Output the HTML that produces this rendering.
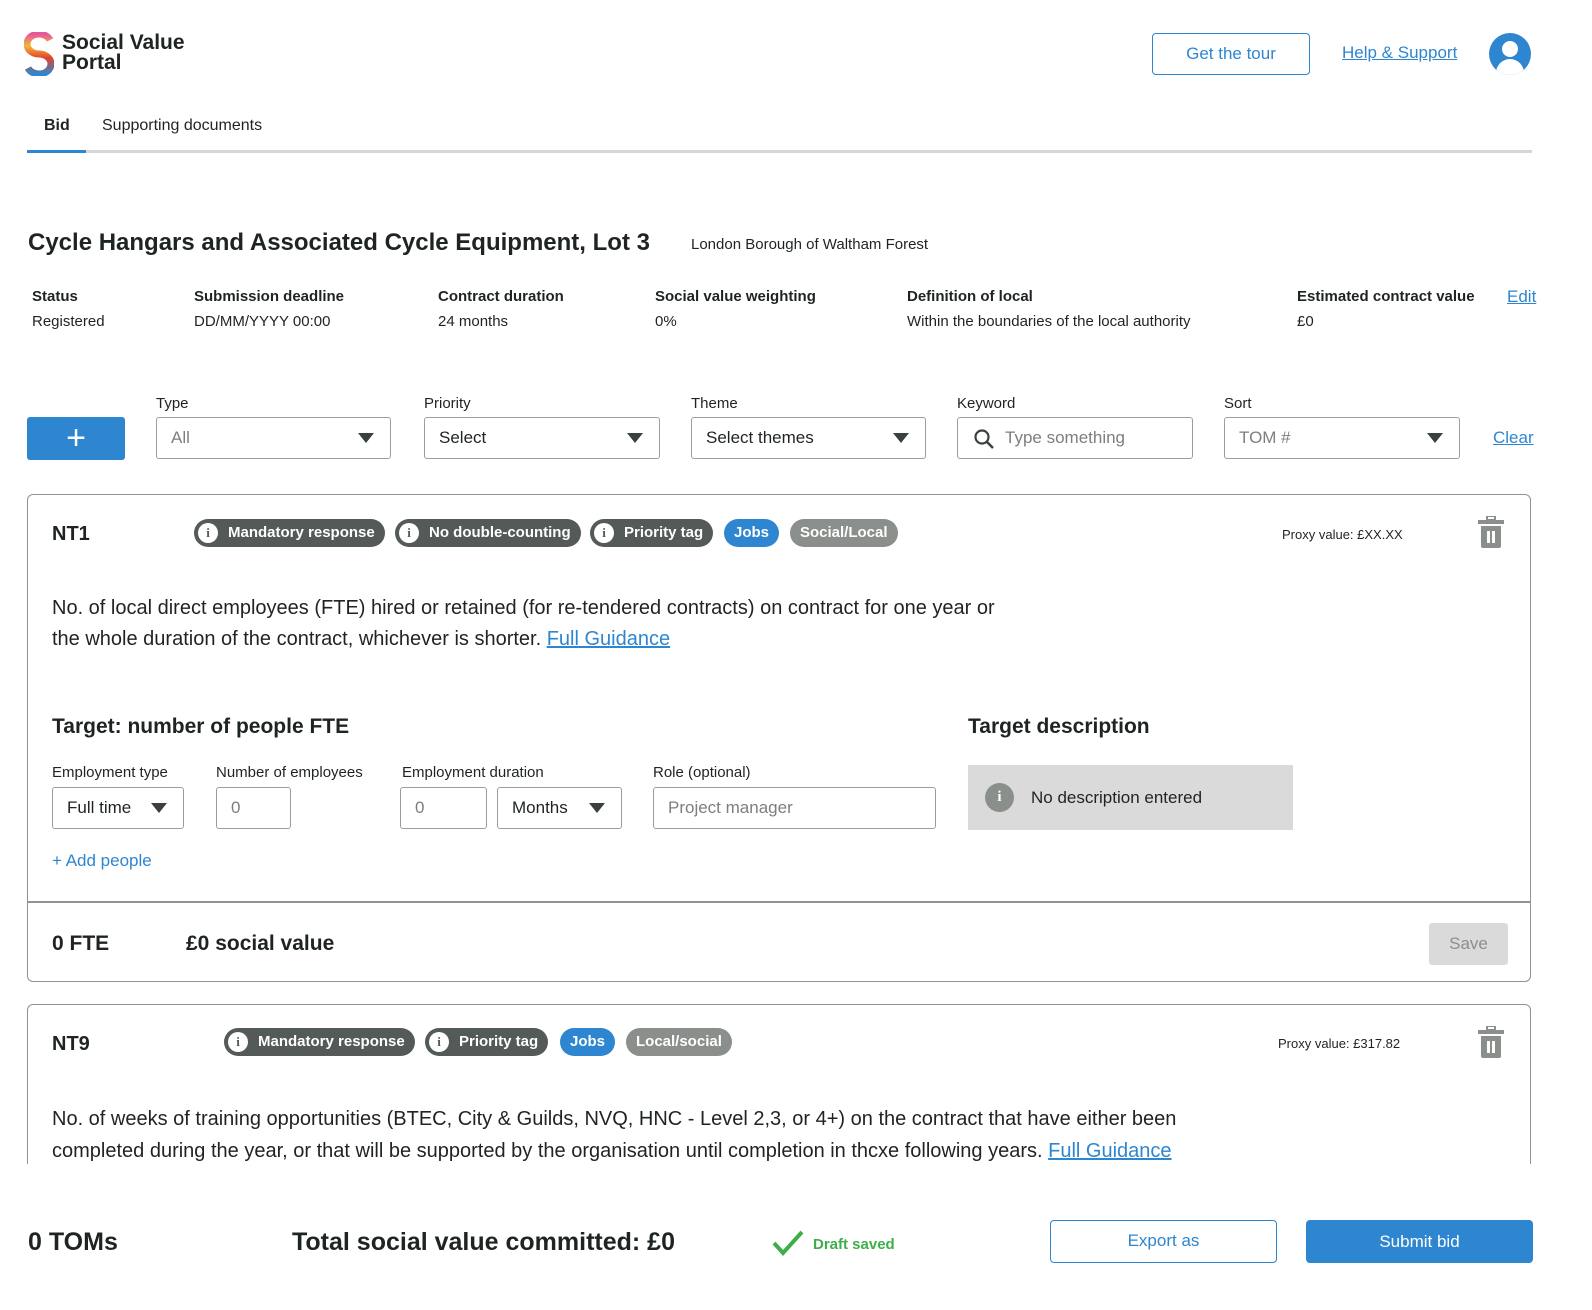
<!DOCTYPE html>
<html><head><meta charset="utf-8"><style>
*{box-sizing:border-box;margin:0;padding:0}
body{width:1592px;height:1310px;background:#fff;font-family:"Liberation Sans",sans-serif;color:#1e2422;position:relative;overflow:hidden}
.a{position:absolute}
.lbl{font-size:15px;color:#1e2422}
.mh{font-size:15px;font-weight:bold}
.mv{font-size:15px;margin-top:8px}
.inp{position:absolute;height:42px;border:1.5px solid #9a9f9d;border-radius:3px;font-size:17px;color:#7b7f7d;padding:0 14px;line-height:39px;background:#fff}
.dd:after{content:"";position:absolute;right:16px;top:15px;border-left:8px solid transparent;border-right:8px solid transparent;border-top:10px solid #3a403e}
.link{color:#2e86d0;text-decoration:underline}
.card{position:absolute;left:27px;width:1504px;border:1.5px solid #8f9492;border-radius:6px;background:#fff}
.pill{position:absolute;height:28px;border-radius:14px;color:#fff;font-weight:bold;font-size:15px;line-height:28px;padding:0 10px 0 34px;background:#535a57}
.pill i{position:absolute;left:4px;top:4px;width:20px;height:20px;border-radius:50%;background:#fff;color:#535a57;font-style:normal;font-family:"Liberation Serif",serif;font-size:13px;text-align:center;line-height:20px}
.pb{background:#2e86d0;padding:0 10px}
.pg{background:#8a8f8c;padding:0 10px}
.trash{position:absolute;width:26px;height:32px}
</style></head><body>
<svg class="a" style="left:24px;top:32px" width="30" height="44" viewBox="0 0 30 44">
<path d="M26 8 A12 10 0 1 0 15 22 A12 10 0 1 1 4 36" fill="none" stroke="url(#g)" stroke-width="7"/>
<defs><linearGradient id="g" x1="0" y1="0" x2="0" y2="1"><stop offset="0" stop-color="#e5569b"/><stop offset=".3" stop-color="#f4b63b"/><stop offset=".6" stop-color="#e0432f"/><stop offset="1" stop-color="#2e86d0"/></linearGradient></defs></svg>
<div class="a" style="left:62px;top:33px;font-size:21px;font-weight:bold;line-height:20px;color:#1e2422">Social Value<br>Portal</div>
<div class="a" style="left:1152px;top:33px;width:158px;height:42px;border:1.5px solid #2e86d0;border-radius:4px;color:#2e86d0;font-size:17px;text-align:center;line-height:39px">Get the tour</div>
<div class="a link" style="left:1342px;top:43px;font-size:17px">Help &amp; Support</div>
<div class="a" style="left:1489px;top:33px;width:42px;height:42px;border-radius:50%;background:#2e86d0;overflow:hidden">
<div class="a" style="left:13px;top:8px;width:16px;height:16px;border-radius:50%;background:#fff"></div>
<div class="a" style="left:7px;top:26px;width:28px;height:20px;border-radius:14px 14px 0 0;background:#fff"></div></div>
<div class="a" style="left:44px;top:117px;font-size:16px;font-weight:bold">Bid</div>
<div class="a" style="left:102px;top:117px;font-size:16px">Supporting documents</div>
<div class="a" style="left:27px;top:150px;width:1505px;height:3px;background:#d5d7d6"></div>
<div class="a" style="left:27px;top:150px;width:59px;height:3px;background:#2e86d0"></div>
<div class="a" style="left:28px;top:229px;font-size:24px;font-weight:bold">Cycle Hangars and Associated Cycle Equipment, Lot 3</div>
<div class="a" style="left:691px;top:236px;font-size:15px">London Borough of Waltham Forest</div>
<div class="a" style="left:32px;top:288px"><div class="mh">Status</div><div class="mv">Registered</div></div>
<div class="a" style="left:194px;top:288px"><div class="mh">Submission deadline</div><div class="mv">DD/MM/YYYY 00:00</div></div>
<div class="a" style="left:438px;top:288px"><div class="mh">Contract duration</div><div class="mv">24 months</div></div>
<div class="a" style="left:655px;top:288px"><div class="mh">Social value weighting</div><div class="mv">0%</div></div>
<div class="a" style="left:907px;top:288px"><div class="mh">Definition of local</div><div class="mv">Within the boundaries of the local authority</div></div>
<div class="a" style="left:1297px;top:288px"><div class="mh">Estimated contract value</div><div class="mv">£0</div></div>
<div class="a link" style="left:1507px;top:287px;font-size:17px">Edit</div>
<div class="a" style="left:27px;top:417px;width:98px;height:43px;background:#2e86d0;border-radius:3px;color:#fff;font-size:34px;text-align:center;line-height:42px">+</div>
<div class="a lbl" style="left:156px;top:395px">Type</div>
<div class="inp dd" style="left:156px;top:417px;width:235px">All</div>
<div class="a lbl" style="left:424px;top:395px">Priority</div>
<div class="inp dd" style="left:424px;top:417px;width:236px;color:#1e2422">Select</div>
<div class="a lbl" style="left:691px;top:395px">Theme</div>
<div class="inp dd" style="left:691px;top:417px;width:235px;color:#1e2422">Select themes</div>
<div class="a lbl" style="left:957px;top:395px">Keyword</div>
<div class="inp" style="left:957px;top:417px;width:236px;padding-left:47px">Type something
<svg class="a" style="left:15px;top:10px" width="22" height="22" viewBox="0 0 22 22"><circle cx="9" cy="9" r="6.5" fill="none" stroke="#3a403e" stroke-width="2.2"/><path d="M14 14l6 6" stroke="#3a403e" stroke-width="2.5"/></svg></div>
<div class="a lbl" style="left:1224px;top:395px">Sort</div>
<div class="inp dd" style="left:1224px;top:417px;width:236px">TOM #</div>
<div class="a link" style="left:1493px;top:428px;font-size:17px">Clear</div>
<div class="card" style="top:494px;height:488px">
<div class="a" style="left:24px;top:28px;font-size:20px;font-weight:bold">NT1</div>
<div class="pill" style="left:166px;top:24px"><i>i</i>Mandatory response</div>
<div class="pill" style="left:367px;top:24px"><i>i</i>No double-counting</div>
<div class="pill" style="left:562px;top:24px"><i>i</i>Priority tag</div>
<div class="pill pb" style="left:696px;top:24px">Jobs</div>
<div class="pill pg" style="left:762px;top:24px">Social/Local</div>
<div class="a" style="left:1254px;top:32px;font-size:13px">Proxy value: £XX.XX</div>
<svg class="trash" style="left:1450px;top:21px" viewBox="0 0 26 32"><rect x="9" y="0" width="8" height="4" rx="1" fill="none" stroke="#8a8f8c" stroke-width="2"/><rect x="0" y="4" width="26" height="4" fill="#8a8f8c"/><path d="M3 10h20v20a2 2 0 0 1-2 2H5a2 2 0 0 1-2-2z" fill="#8a8f8c"/><rect x="9" y="15" width="3" height="12" fill="#fff"/><rect x="14" y="15" width="3" height="12" fill="#fff"/></svg>
<div class="a" style="left:24px;top:98px;font-size:20px;line-height:31px;width:960px">No. of local direct employees (FTE) hired or retained (for re-tendered contracts) on contract for one year or the whole duration of the contract, whichever is shorter. <span class="link">Full Guidance</span></div>
<div class="a" style="left:24px;top:220px;font-size:21px;font-weight:bold">Target: number of people FTE</div>
<div class="a" style="left:940px;top:220px;font-size:21px;font-weight:bold">Target description</div>
<div class="a lbl" style="left:24px;top:269px">Employment type</div>
<div class="a lbl" style="left:188px;top:269px">Number of employees</div>
<div class="a lbl" style="left:374px;top:269px">Employment duration</div>
<div class="a lbl" style="left:625px;top:269px">Role (optional)</div>
<div class="inp dd" style="left:24px;top:292px;width:132px;color:#1e2422">Full time</div>
<div class="inp" style="left:188px;top:292px;width:75px">0</div>
<div class="inp" style="left:372px;top:292px;width:87px">0</div>
<div class="inp dd" style="left:469px;top:292px;width:125px;color:#1e2422">Months</div>
<div class="inp" style="left:625px;top:292px;width:283px">Project manager</div>
<div class="a" style="left:940px;top:270px;width:325px;height:65px;background:#d9dad9">
<div class="a" style="left:17px;top:18px;width:29px;height:29px;border-radius:50%;background:#8a8f8c;color:#fff;font-family:'Liberation Serif',serif;font-size:15px;text-align:center;line-height:29px;font-weight:bold">i</div>
<div class="a" style="left:63px;top:23px;font-size:17px">No description entered</div></div>
<div class="a" style="left:24px;top:356px;font-size:17px;color:#2e86d0">+ Add people</div>
<div class="a" style="left:-1px;top:406px;width:1504px;height:2px;background:#8f9492"></div>
<div class="a" style="left:24px;top:437px;font-size:21px;font-weight:bold">0 FTE</div>
<div class="a" style="left:158px;top:437px;font-size:21px;font-weight:bold">£0 social value</div>
<div class="a" style="left:1401px;top:428px;width:79px;height:42px;background:#d9dad9;border-radius:3px;color:#8a8f8c;font-size:17px;text-align:center;line-height:42px">Save</div>
</div>
<div class="card" style="top:1004px;height:300px">
<div class="a" style="left:24px;top:28px;font-size:20px;font-weight:bold">NT9</div>
<div class="pill" style="left:196px;top:23px"><i>i</i>Mandatory response</div>
<div class="pill" style="left:397px;top:23px"><i>i</i>Priority tag</div>
<div class="pill pb" style="left:532px;top:23px">Jobs</div>
<div class="pill pg" style="left:598px;top:23px">Local/social</div>
<div class="a" style="left:1250px;top:31px;font-size:13px">Proxy value: £317.82</div>
<svg class="trash" style="left:1450px;top:21px" viewBox="0 0 26 32"><rect x="9" y="0" width="8" height="4" rx="1" fill="none" stroke="#8a8f8c" stroke-width="2"/><rect x="0" y="4" width="26" height="4" fill="#8a8f8c"/><path d="M3 10h20v20a2 2 0 0 1-2 2H5a2 2 0 0 1-2-2z" fill="#8a8f8c"/><rect x="9" y="15" width="3" height="12" fill="#fff"/><rect x="14" y="15" width="3" height="12" fill="#fff"/></svg>
<div class="a" style="left:24px;top:98px;font-size:20px;line-height:32px;width:1140px">No. of weeks of training opportunities (BTEC, City &amp; Guilds, NVQ, HNC - Level 2,3, or 4+) on the contract that have either been completed during the year, or that will be supported by the organisation until completion in thcxe following years. <span class="link">Full Guidance</span></div>
</div>
<div class="a" style="left:0;top:1164px;width:1592px;height:146px;background:#fff"></div>
<div class="a" style="left:28px;top:1228px;font-size:25px;font-weight:bold">0 TOMs</div>
<div class="a" style="left:292px;top:1228px;font-size:25px;font-weight:bold">Total social value committed: £0</div>
<svg class="a" style="left:772px;top:1230px" width="32" height="26" viewBox="0 0 32 26"><path d="M2 13l9 10L30 2" fill="none" stroke="#3fae4a" stroke-width="4"/></svg>
<div class="a" style="left:813px;top:1236px;font-size:15px;font-weight:bold;color:#3fae4a">Draft saved</div>
<div class="a" style="left:1050px;top:1220px;width:227px;height:43px;border:1.5px solid #2e86d0;border-radius:4px;color:#2e86d0;font-size:17px;text-align:center;line-height:40px">Export as</div>
<div class="a" style="left:1306px;top:1220px;width:227px;height:43px;background:#2e86d0;border-radius:4px;color:#fff;font-size:17px;text-align:center;line-height:43px">Submit bid</div>
</body></html>
